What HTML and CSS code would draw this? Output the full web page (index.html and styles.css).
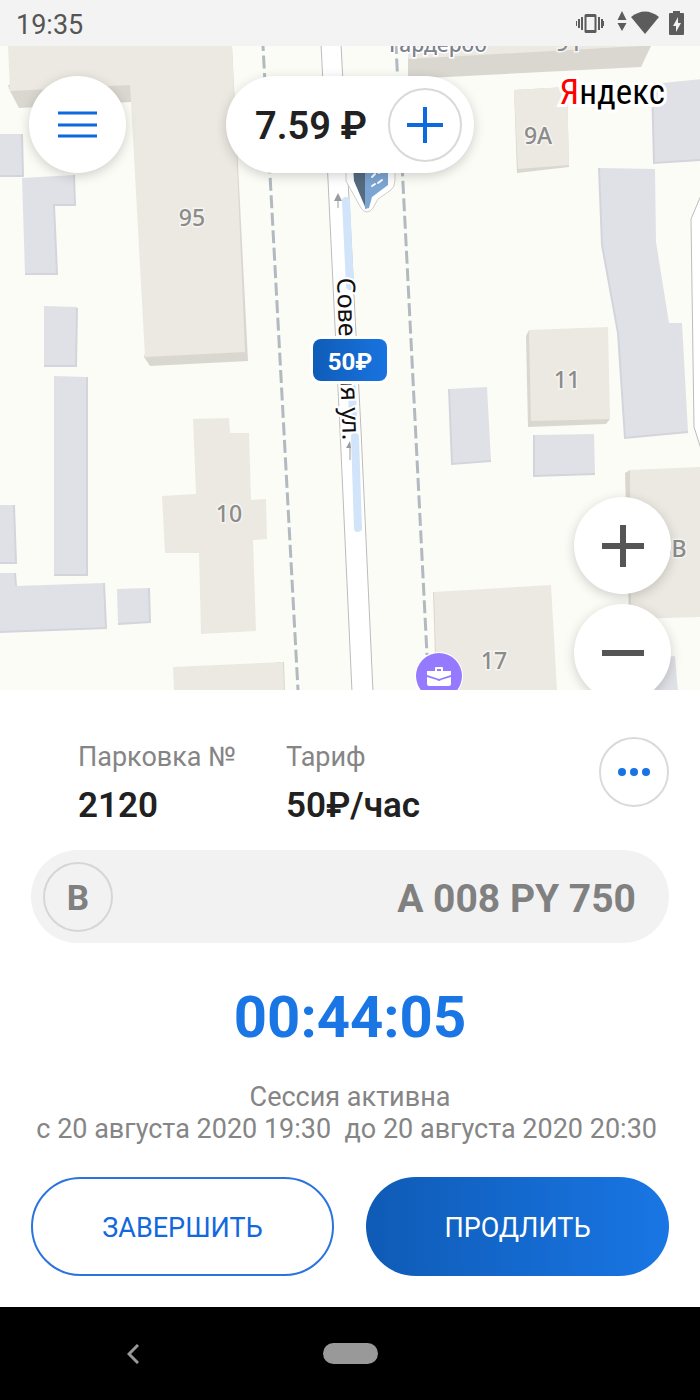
FILE: index.html
```html
<!DOCTYPE html>
<html lang="ru">
<head>
<meta charset="utf-8">
<meta name="viewport" content="width=device-width, initial-scale=1">
<title>Парковка</title>
<link rel="stylesheet" href="styles.css">
</head>
<body>
<div class="screen">
  <header class="status">
    <time class="clock">19:35</time>
    <svg class="status-icons" viewBox="0 0 112 30" width="112" height="30" aria-hidden="true">
      <g fill="#5c5c5c">
        <path fill-rule="evenodd" d="M12 6h9q1.500 0 1.500 1.500v16q0 1.500-1.500 1.500H12q-1.500 0-1.500-1.500v-16Q10.500 6 12 6zm.5 3v13h8V9z"/>
        <path d="M7 9h2v13H7zM4 11h2v9H4zM2 13h1v5H2zM24 9h2v13h-2zM27 11h2v9h-2zM29 13h1v5h-1z" />
        <path d="M48 3l4.500 9h-9zM48 23l-4.500-8h9z"/>
        <path d="M71 26L57 9q14-11 28 0z"/>
        <path fill-rule="evenodd" d="M99 3h7v2h3q1 0 1 1v20q0 1-1 1H96q-1 0-1-1V6q0-1 1-1h3zm5 6l-5 9h3v6l5-9h-3z"/>
      </g>
    </svg>
  </header>

  <main class="map">
    <svg class="map-canvas" viewBox="0 46 700 644" preserveAspectRatio="xMidYMid slice" aria-label="Карта">
      <defs>
        <linearGradient id="price" x1="0" x2="1"><stop offset="0" stop-color="#0f5cb8"/><stop offset="1" stop-color="#1974e0"/></linearGradient>
      </defs>
      <rect y="46" width="700" height="644" fill="#fbfcf6"/>

      <!-- side street at the right edge -->
      <path class="road" d="M702 193L691 219L694 427L702 452"/>

      <!-- low buildings -->
      <g class="low">
        <path d="M-2 134H22L23 176H-2z"/>
        <path d="M22 178L74 175L75 205H54L57 274H25z"/>
        <path d="M44 306L77 307L76 366H44z"/>
        <path d="M54 376L87 377V575H54z"/>
        <path d="M-2 505H14L16 563H-2z"/>
        <path d="M-2 573H15L16 586L104 583L106 628L-2 632z"/>
        <path d="M117 589L149 588L150 622L118 624z"/>
        <path d="M652 84L702 79V160L654 163z"/>
        <path d="M599 168L655 169L656 242L669 323H682L688 432L625 438L618 333L602 245z"/>
        <path d="M449 389L487 387L491 461L452 464z"/>
        <path d="M534 435L594 434L595 474L534 476z"/>
        <path d="M655 658L675 656L678 692H655z"/>
      </g>
      <g class="low-edge">
        <path d="M22 134L23 176H0M74 175L75 205H54L57 274H25M77 308L76 366H44M87 377V575H54M14 505L16 563H0M15 573L16 586M104 583L106 628L0 632M149 588L150 622L118 624M700 160L654 163L652 84M688 432L625 438L618 333L602 245L599 168M491 461L452 464L449 389M595 474L534 476V435"/>
      </g>

      <!-- tall buildings: walls, then roofs -->
      <g class="wall">
        <path d="M8 85L10 91L19 108L131 102V80zM232 46L248 361L150 366L144 357z"/>
        <path d="M408 46V79L641 67L651 46z"/>
        <path d="M514 90L567 87L569 167L517 173z"/>
        <path d="M526 336L529 330L610 419L606 424L528 427z"/>
        <path d="M625 473L630 470L640 619H629z"/>
        <path d="M433 592L440 592V690H436z"/>
        <path d="M276 662H284L285 690H276z"/>
      </g>
      <g class="roof">
        <path d="M8 46H232L245 352L145 357L131 102L130 85L10 91z"/>
        <path d="M408 46V59L640 46z"/>
        <path d="M514 90L567 87L569 165L518 169z"/>
        <path d="M529 330L608 327L610 419L531 421z"/>
        <path d="M193 419L229 418L230 433H249L251 500L266 499L267 539L253 540L256 631L201 634L199 553H165L162 496L196 494z"/>
        <path d="M173 667L283 662L284 690H174z"/>
        <path d="M434 592L551 585L557 690H437z"/>
        <path d="M630 470L702 467V617L631 619z"/>
      </g>

      <!-- main street -->
      <path class="road" d="M321 44L328 180L340 430L352 692H373L361 430L348 180L341 44z"/>
      <path class="parking" d="M346 201L350 286M352 388L353 420M355 437L358 528"/>
      <g class="arrow">
        <path d="M338 208V199M350 460V448" fill="none" stroke="#9b9b9b" stroke-width="1"/>
        <path d="M338 193L342 201H334zM350 441L351 448H346z"/>
      </g>
      <path class="kerb" stroke-dashoffset="8" d="M263 46L298 690"/>
      <path class="kerb" stroke-dashoffset="5" d="M396 46L427 655"/>

      <g class="house">
        <text x="192" y="226">95</text>
        <text x="538" y="144">9А</text>
        <text x="567" y="388">11</text>
        <text x="229" y="522">10</text>
        <text x="494" y="669">17</text>
        <text x="666" y="557">13В</text>
        <text x="569" y="51">91</text>
      </g>
      <text class="poi-name" x="438" y="52">Гардероб</text>
      <text class="street-name" transform="translate(337 278) rotate(88)">Советская ул.</text>

      <!-- museum pin -->
      <path d="M346 170V181L361 208Q367 216 373 208L378 199L391 190Q395 187 395 180V165z" fill="#fff" stroke="#cfcfcf"/>
      <path d="M353 165L354 181L366 209V165z" fill="#566b80"/>
      <path d="M365 165V209L369 208L372 197L388 185V165z" fill="#7ba5d3"/>
      <path d="M372 177L375 174M379 173L384 170M372 186L375 184M378 183L382 180" stroke="#fff" stroke-width="2" stroke-linecap="round"/>

      <!-- briefcase marker -->
      <circle cx="439" cy="676" r="24" fill="#fff"/>
      <circle cx="439" cy="676" r="23" fill="#957aff"/>
      <path fill="#fff" fill-rule="evenodd" d="M427 671H435V668Q435 667 436 667H442Q443 667 443 668V671H451V675L439 679L427 675zM437 669V671H441V669zM427 677L437 680Q439 682 441 680L451 677V684Q451 686 449 686H429Q427 686 427 684z"/>

      <!-- tariff marker -->
      <rect x="310" y="336" width="80" height="48" rx="11" fill="#fff"/>
      <rect x="313" y="339" width="74" height="42" rx="8" fill="url(#price)"/>
      <text class="price" x="350" y="370">50₽</text>
    </svg>

    <div class="map-top">
      <button class="round" type="button" aria-label="Меню">
        <svg viewBox="0 0 40 30" width="40" height="30"><path d="M0 3h39M0 15h39M0 26h39" stroke="#0d69de" stroke-width="3"/></svg>
      </button>
      <div class="balance">
        <span class="amount">7.59 ₽</span>
        <button class="add" type="button" aria-label="Пополнить">
          <svg viewBox="0 0 36 36" width="36" height="36"><path d="M0 18h36M18 0v36" stroke="#0d69de" stroke-width="4"/></svg>
        </button>
      </div>
    </div>
    <a class="brand" href="#"><span class="brand-initial">Я</span>ндекс</a>
    <div class="zoom">
      <button class="round" type="button" aria-label="Приблизить">
        <svg viewBox="0 0 42 42" width="42" height="42"><path d="M0 21h42M21 0v42" stroke="#555" stroke-width="6"/></svg>
      </button>
      <button class="round" type="button" aria-label="Отдалить">
        <svg viewBox="0 0 42 42" width="42" height="42"><path d="M0 21h42" stroke="#555" stroke-width="6"/></svg>
      </button>
    </div>
  </main>

  <section class="sheet">
    <div class="info">
      <dl class="facts">
        <div class="fact"><dt>Парковка №</dt><dd>2120</dd></div>
        <div class="fact"><dt>Тариф</dt><dd>50₽/час</dd></div>
      </dl>
      <button class="more" type="button" aria-label="Ещё">
        <svg viewBox="0 0 32 8" width="32" height="8" fill="#1a73e3"><circle cx="4" cy="4" r="4"/><circle cx="16" cy="4" r="4"/><circle cx="28" cy="4" r="4"/></svg>
      </button>
    </div>
    <div class="plate">
      <span class="category">B</span>
      <span class="number">A 008 PY 750</span>
    </div>
    <div class="timer">00:44:05</div>
    <p class="session">Сессия активна<br>с 20 августа 2020 19:30&nbsp; до 20 августа 2020 20:30&nbsp;</p>
    <div class="actions">
      <button class="action outline" type="button">ЗАВЕРШИТЬ</button>
      <button class="action filled" type="button">ПРОДЛИТЬ</button>
    </div>
  </section>

  <nav class="system">
    <button class="back" type="button" aria-label="Назад">
      <svg viewBox="0 0 12 20" width="12" height="20"><path d="M11 1L2 10l9 9" fill="none" stroke="#999" stroke-width="3"/></svg>
    </button>
    <button class="home" type="button" aria-label="Домой"></button>
  </nav>
</div>
</body>
</html>
```
FILE: styles.css
```css
* { box-sizing: border-box; }

body {
  margin: 0;
  font-family: Roboto, "Noto Sans", sans-serif;
  color: #212121;
  background: #fff;
}

button {
  padding: 0;
  border: 0;
  background: none;
  font: inherit;
  color: inherit;
  cursor: pointer;
}

svg { display: block; }

.screen {
  display: flex;
  flex-direction: column;
  min-height: 100vh;
}

/* Status bar */
.status {
  display: flex;
  align-items: center;
  justify-content: space-between;
  height: 46px;
  padding: 0 14px 0 16px;
  background: #f3f3f3;
}

.clock {
  padding-top: 3px;
  font-size: 27px;
  line-height: 32px;
  color: #555;
}

/* Map */
.map {
  position: relative;
  flex: 1;
  min-height: 480px;
  overflow: hidden;
}

.map-canvas {
  position: absolute;
  inset: 0;
  width: 100%;
  height: 100%;
}

.low { fill: #e0e1e6; }
.low-edge { fill: none; stroke: #d3d4dc; stroke-width: 2; }
.roof { fill: #ece9e2; }
.wall { fill: #dad7d0; }
.road { fill: #fff; stroke: #bcbcbc; stroke-width: 1; }
.parking { fill: none; stroke: #d1e4fa; stroke-width: 8; stroke-linecap: round; }
.arrow { fill: #9b9b9b; }
.kerb { fill: none; stroke: #b3b9c1; stroke-width: 3; stroke-dasharray: 13 4.5; }

.house {
  font: 500 23px "Noto Sans", sans-serif;
  fill: #8b8b8b;
  stroke: #f5f4f0;
  stroke-width: 3px;
  paint-order: stroke;
  text-anchor: middle;
}

.poi-name {
  font: 500 21px "Noto Sans", sans-serif;
  fill: #7b828b;
  stroke: #fff;
  stroke-width: 3px;
  paint-order: stroke;
  text-anchor: middle;
}

.street-name {
  font: 25px "Noto Sans", sans-serif;
  fill: #111;
  stroke: #fff;
  stroke-width: 4px;
  paint-order: stroke;
}

.price {
  font: 700 24px Roboto, sans-serif;
  fill: #fff;
  text-anchor: middle;
}

.map-top {
  position: absolute;
  top: 30px;
  left: 29px;
  right: 29px;
  display: grid;
  grid-template-columns: 1fr auto 1fr;
}

.round {
  display: grid;
  place-items: center;
  width: 97px;
  height: 97px;
  border-radius: 50%;
  background: #fff;
  box-shadow: 0 3px 12px rgba(0, 0, 0, 0.18);
}

.balance {
  display: flex;
  align-items: center;
  gap: 21px;
  height: 97px;
  padding: 0 12px 0 29px;
  border-radius: 49px;
  background: #fff;
  box-shadow: 0 3px 12px rgba(0, 0, 0, 0.18);
}

.amount {
  padding-top: 2px;
  font-size: 38px;
  font-weight: 600;
  white-space: nowrap;
}

.add {
  display: grid;
  place-items: center;
  width: 74px;
  height: 74px;
  border: 2px solid #d9d9d9;
  border-radius: 50%;
}

.brand {
  position: absolute;
  top: 25px;
  right: 35px;
  font: 35px/44px "Roboto Condensed", "Open Sans Condensed", Roboto, sans-serif;
  color: #000;
  text-decoration: none;
  -webkit-text-stroke: 6px #fff;
  paint-order: stroke fill;
}

.brand-initial { color: #f00; }

.zoom {
  position: absolute;
  right: 29px;
  bottom: -11px;
  display: grid;
  gap: 10px;
}

/* Parking session */
.sheet {
  padding: 47px 31px 31px;
  background: #fff;
}

.info {
  display: flex;
  justify-content: space-between;
  align-items: flex-start;
}

.facts {
  display: flex;
  gap: 50px;
  margin: 0;
  padding: 4px 0 0 47px;
}

.fact dt {
  font-size: 27px;
  line-height: 32px;
  color: #858585;
}

.fact dd {
  margin: 13px 0 0;
  font-size: 35px;
  font-weight: 600;
  line-height: 40px;
}

.more {
  display: grid;
  place-items: center;
  width: 70px;
  height: 70px;
  border: 2px solid #dadada;
  border-radius: 50%;
}

.plate {
  display: flex;
  align-items: center;
  justify-content: space-between;
  height: 93px;
  margin-top: 24px;
  padding: 0 33px 0 12px;
  border-radius: 47px;
  background: #f2f2f2;
  color: #808080;
  font-weight: 700;
}

.category {
  display: grid;
  place-items: center;
  width: 70px;
  height: 70px;
  padding-top: 4px;
  border: 2px solid #d6d6d6;
  border-radius: 50%;
  font-size: 35px;
}

.number {
  padding-top: 4px;
  font-size: 39px;
}

.timer {
  margin-top: 42px;
  font-size: 58px;
  font-weight: 700;
  line-height: 64px;
  text-align: center;
  color: #1a75e5;
}

.session {
  margin: 32px 0 0;
  font-size: 27px;
  line-height: 32px;
  text-align: center;
  color: #858585;
}

.actions {
  display: grid;
  grid-template-columns: 1fr 1fr;
  gap: 32px;
  margin-top: 32px;
}

.action {
  height: 99px;
  padding-top: 2px;
  border-radius: 50px;
  font-size: 27px;
}

.outline {
  border: 2px solid #2b74df;
  color: #1368dd;
}

.filled {
  background: linear-gradient(90deg, #0f5bb6, #1976e4);
  color: #fff;
}

/* System navigation */
.system {
  display: grid;
  grid-template-columns: 38fr 24fr 38fr;
  place-items: center;
  height: 93px;
  background: #000;
}

.home {
  width: 55px;
  height: 21px;
  border-radius: 11px;
  background: #999;
}
```
